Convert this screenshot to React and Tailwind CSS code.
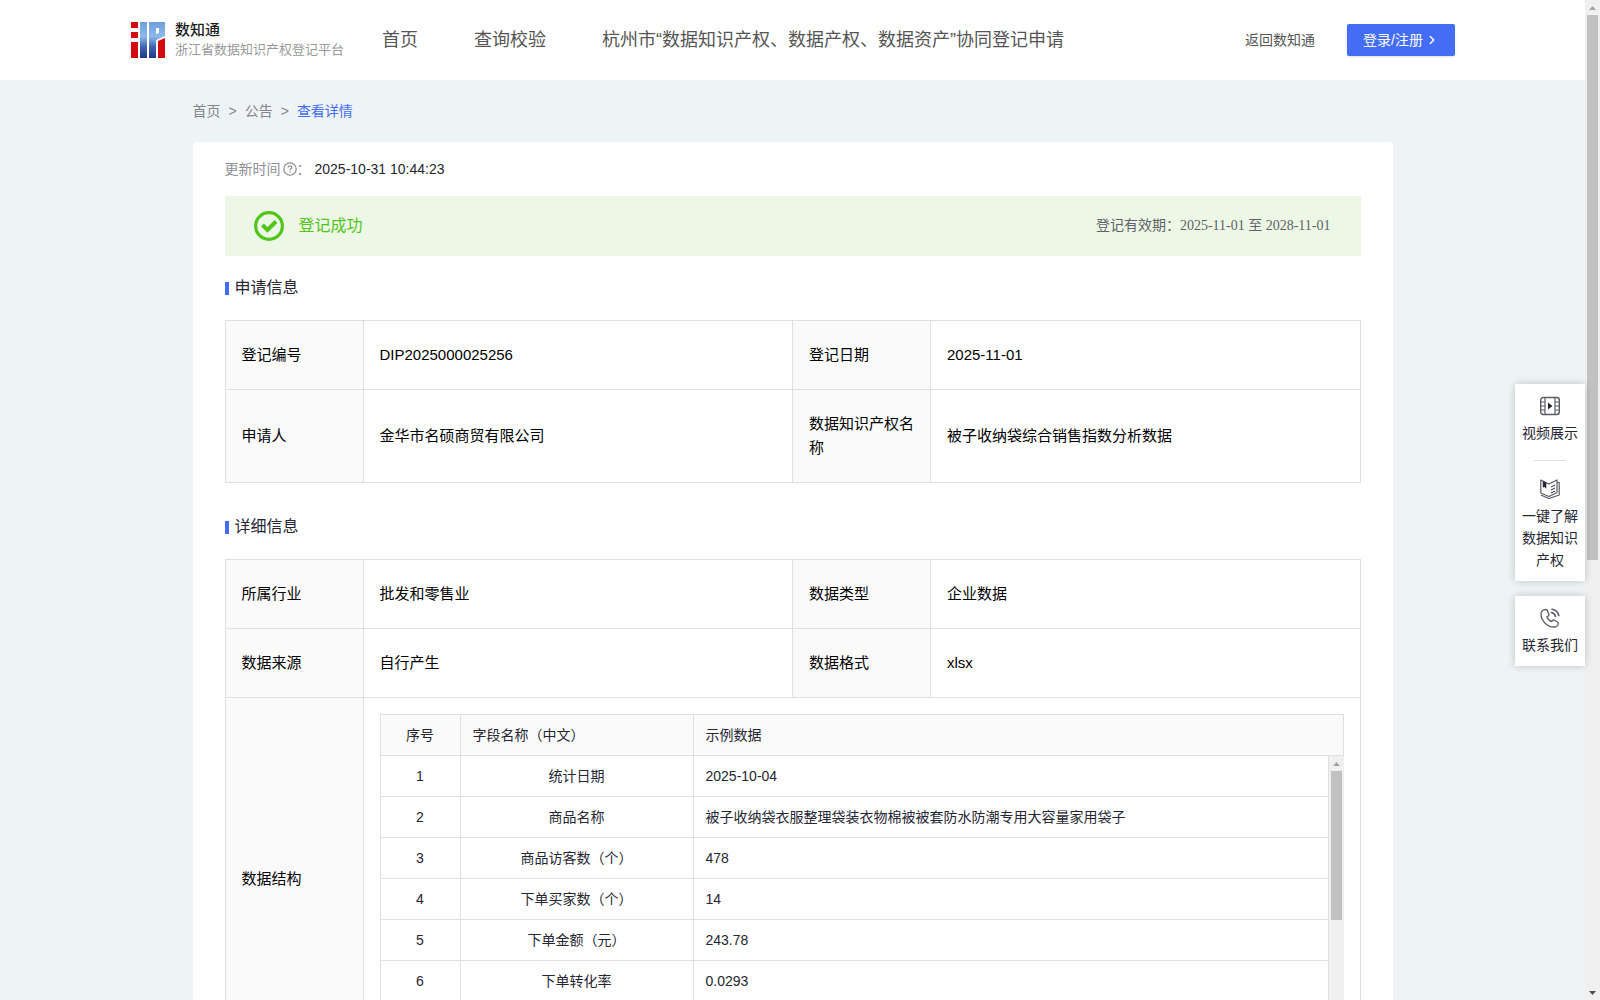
import { ChevronRight } from "lucide-react";

const navLinks = ["首页", "查询校验", "杭州市“数据知识产权、数据产权、数据资产”协同登记申请"];

const applyRows = [
  ["登记编号", "DIP2025000025256", "登记日期", "2025-11-01"],
  ["申请人", "金华市名硕商贸有限公司", "数据知识产权名称", "被子收纳袋综合销售指数分析数据"],
];

const detailRows = [
  ["所属行业", "批发和零售业", "数据类型", "企业数据"],
  ["数据来源", "自行产生", "数据格式", "xlsx"],
];

const fields = [
  ["统计日期", "2025-10-04"],
  ["商品名称", "被子收纳袋衣服整理袋装衣物棉被被套防水防潮专用大容量家用袋子"],
  ["商品访客数（个）", "478"],
  ["下单买家数（个）", "14"],
  ["下单金额（元）", "243.78"],
  ["下单转化率", "0.0293"],
];

const Logo = () => (
  <svg width="34" height="36" viewBox="0 0 34 36" aria-hidden="true">
    <defs>
      <linearGradient id="logoBlue" x1="0" y1="0" x2="0" y2="36" gradientUnits="userSpaceOnUse">
        <stop offset="0" stopColor="#6f9fdc" />
        <stop offset="0.4" stopColor="#8db8ea" />
        <stop offset="0.7" stopColor="#3f62ae" />
        <stop offset="1" stopColor="#223a86" />
      </linearGradient>
    </defs>
    <path fill="#d20a10" d="M0 0h7v6H0zM0 10h7v6H0zM0 20h7v16H0zM27 19l7-3v20h-7z" />
    <path fill="url(#logoBlue)" d="M9 0h7v36H9zM18 0h16v14l-9 4v18h-7zM25 6v6l3-1V6z" fillRule="evenodd" />
  </svg>
);

const VideoIcon = () => (
  <svg width="20" height="20" viewBox="0 0 20 20" fill="none" stroke="#5a5c66" aria-hidden="true">
    <rect x="0.7" y="1.5" width="18.6" height="17" rx="2.5" strokeWidth="1.4" />
    <path d="M5 1.5v17M15 1.5v17M1 6h4M1 10h4M1 14h4M15 6h4M15 10h4M15 14h4" strokeWidth="1.2" />
    <path d="M8 6.500l4.500 3.500L8 13.500z" fill="#252631" stroke="none" />
  </svg>
);

const BookIcon = () => (
  <svg width="20" height="20" viewBox="0 0 20 20" fill="none" stroke="#5a5c66" strokeLinejoin="round" aria-hidden="true">
    <path d="M.8 1l8 4L17 1v12.500L9 17.500.8 14z" strokeWidth="1.2" />
    <path d="M17 3.500h2.200V16L9 19.500.8 16" strokeWidth="1.2" />
    <path d="M11 8l4-2M11 11l4-2M11 14l4-2" stroke="#252631" />
    <path d="M2.800 2l3.500 1.700v6L4.600 8l-1.800.5z" fill="#252631" stroke="none" />
  </svg>
);

const PhoneIcon = () => (
  <svg width="20" height="20" viewBox="0 0 20 20" fill="none" stroke="#5a5c66" strokeLinejoin="round" strokeLinecap="round" aria-hidden="true">
    <path
      d="M5.500 1.500C3 1.500 1 3.500 1 6c0 6.500 6 13 13 13 2.500 0 4.300-1.700 4.300-3.500 0-.7-.3-1.200-.8-1.500l-3-1.800c-.7-.4-1.400-.2-1.900.3l-1 1.200c-1.800-.6-4-2.900-4.700-4.900L8.300 8c.6-.5.8-1.200.5-1.900L7.300 2.500c-.3-.7-.9-1-1.800-1z"
      strokeWidth="1.3"
    />
    <path d="M11.500 4.500c2.200.5 3.500 1.800 4 4M12 1.200c3.700.6 6 2.800 6.800 6.300" strokeWidth="1.6" />
  </svg>
);

const HelpIcon = () => (
  <svg width="14" height="14" viewBox="0 0 14 14" fill="none" stroke="#8f9096" strokeWidth="1.300" aria-label="说明">
    <circle cx="7" cy="7" r="6.200" />
    <path d="M5.200 5.600c0-2.300 3.600-2.300 3.600 0C8.800 6.800 7 6.800 7 8.200M7 9.300v1.200" />
  </svg>
);

const SuccessIcon = () => (
  <svg width="30" height="30" viewBox="0 0 30 30" fill="none" stroke="#52c41a" aria-hidden="true">
    <circle cx="15" cy="15" r="13.400" strokeWidth="3.200" />
    <path d="M8.500 14l5 5 8.500-8.500" strokeWidth="4" />
  </svg>
);

const Arrow = ({ down = false }) => (
  <svg width="7" height="4" viewBox="0 0 7 4" aria-hidden="true">
    <path d={down ? "M0 0h7L3.500 4z" : "M0 4h7L3.500 0z"} fill={down ? "#505050" : "#a3a3a3"} />
  </svg>
);

const ScrollBar = ({ children }) => (
  <div className="flex w-[15px] shrink-0 flex-col items-center bg-[#f0f0f0]">
    <div className="flex h-[15px] shrink-0 items-center">
      <Arrow />
    </div>
    <div className="w-full flex-1 px-[2px]">{children}</div>
    <div className="flex h-[15px] shrink-0 items-center">
      <Arrow down />
    </div>
  </div>
);

const SectionTitle = ({ children }) => (
  <h2 className="flex h-6 items-center gap-[6px] text-base text-[#252631]">
    <span className="h-[13px] w-1 bg-[#446df6]"></span>
    {children}
  </h2>
);

const InfoTable = ({ rows, children }) => (
  <table className="w-full table-fixed border-collapse text-[15px] leading-6 text-black">
    <colgroup>
      <col className="w-[138px]" />
      <col />
      <col className="w-[138px]" />
      <col />
    </colgroup>
    <tbody>
      {rows.map((row) => (
        <tr key={row[0]}>
          {row.map((text, i) =>
            i % 2 === 0 ? (
              <th
                key={text}
                scope="row"
                className="h-[69px] border border-[#e0e0e0] bg-[#fafafa] px-4 py-[22px] text-left font-normal"
              >
                {text}
              </th>
            ) : (
              <td key={text} className="border border-[#e0e0e0] px-4">
                {text}
              </td>
            )
          )}
        </tr>
      ))}
      {children}
    </tbody>
  </table>
);

const cell = "h-[41px] border-r border-b border-[#e0e0e0] px-3 font-normal";

const FieldCols = () => (
  <colgroup>
    <col className="w-20" />
    <col className="w-[233px]" />
    <col />
  </colgroup>
);

const FieldTable = () => (
  <div className="border-l border-[#e0e0e0] text-sm text-[#252631]">
    <table className="w-full table-fixed border-separate border-spacing-0 border-t border-[#e0e0e0]">
      <FieldCols />
      <thead>
        <tr className="bg-[#fafafa]">
          <th className={`${cell} text-center`}>序号</th>
          <th className={`${cell} text-left`}>字段名称（中文）</th>
          <th className={`${cell} text-left`}>示例数据</th>
        </tr>
      </thead>
    </table>
    <div className="flex h-[287px] overflow-hidden">
      <div className="min-w-0 flex-1">
        <table className="w-full table-fixed border-separate border-spacing-0">
          <FieldCols />
          <tbody>
            {fields.map(([name, sample], i) => (
              <tr key={name}>
                <td className={`${cell} text-center`}>{i + 1}</td>
                <td className={`${cell} text-center`}>{name}</td>
                <td className={cell}>{sample}</td>
              </tr>
            ))}
          </tbody>
        </table>
      </div>
      <ScrollBar>
        <div className="h-[149px] bg-[#c1c1c1]"></div>
      </ScrollBar>
    </div>
  </div>
);

const Header = () => (
  <header className="flex h-20 items-center bg-white pr-[130px] pl-[131px]">
    <a href="#" className="flex items-center gap-[10px]">
      <Logo />
      <span className="flex flex-col whitespace-nowrap">
        <span className="text-[15px] leading-5 font-medium text-[#1f1f1f]">数知通</span>
        <span className="text-[13px] leading-5 text-[#999999]">浙江省数据知识产权登记平台</span>
      </span>
    </a>
    <nav className="ml-[38px] flex gap-14 text-lg whitespace-nowrap text-[#555555]">
      {navLinks.map((label) => (
        <a key={label} href="#">
          {label}
        </a>
      ))}
    </nav>
    <div className="ml-auto flex items-center gap-8 text-sm whitespace-nowrap">
      <a href="#" className="text-[#555555]">
        返回数知通
      </a>
      <button className="flex h-8 items-center gap-[2px] rounded-[2px] bg-[#446df6] px-4 text-white shadow-sm">
        登录/注册
        <ChevronRight size={14} strokeWidth={2.5} />
      </button>
    </div>
  </header>
);

const SideItem = ({ icon, children }) => (
  <a href="#" className="flex flex-col items-center gap-[6px] text-center">
    {icon}
    <span className="leading-[22px]">{children}</span>
  </a>
);

const SideTools = () => (
  <aside className="absolute top-96 right-[15px] flex w-[70px] flex-col gap-[15px] text-sm text-[#252631]">
    <div className="flex flex-col items-center bg-white px-[6px] pt-3 pb-[10px] shadow-[0_0_8px_rgba(0,0,0,0.2)]">
      <SideItem icon={<VideoIcon />}>视频展示</SideItem>
      <hr className="mt-4 mb-[18px] w-8 border-[#e0e0e0]" />
      <SideItem icon={<BookIcon />}>一键了解数据知识产权</SideItem>
    </div>
    <div className="bg-white px-[6px] pt-3 pb-[10px] shadow-[0_0_8px_rgba(0,0,0,0.2)]">
      <SideItem icon={<PhoneIcon />}>联系我们</SideItem>
    </div>
  </aside>
);

const App = () => (
  <div className="flex h-screen overflow-hidden bg-[#eef3f6] font-['Liberation_Sans','Noto_Sans_CJK_SC',sans-serif]">
    <div className="min-w-0 flex-1 overflow-hidden">
      <Header />
      <main className="mx-auto max-w-[1200px]">
        <nav className="flex h-[62px] items-center gap-2 text-sm text-[#85868c]">
          <a href="#">首页</a>
          <span>&gt;</span>
          <a href="#">公告</a>
          <span>&gt;</span>
          <a href="#" className="text-[#446df6]">
            查看详情
          </a>
        </nav>
        <section className="rounded-t bg-white px-8 pt-4">
          <div className="flex h-[22px] items-center text-sm text-[#252631]">
            <span className="flex items-center text-[#8f9096]">
              更新时间
              <span className="ml-[2px]">
                <HelpIcon />
              </span>
              ：
            </span>
            <time className="ml-1">2025-10-31 10:44:23</time>
          </div>
          <div className="mt-4 flex h-[60px] items-center bg-[#ecf7e6] pr-[30px] pl-[29px]">
            <SuccessIcon />
            <strong className="ml-[15px] text-base font-normal text-[#52c41a]">登记成功</strong>
            <p className="ml-auto font-['Liberation_Serif','Noto_Sans_CJK_SC',serif] text-sm text-[#5f6266]">
              登记有效期：2025-11-01 至 2028-11-01
            </p>
          </div>
          <div className="my-5">
            <SectionTitle>申请信息</SectionTitle>
          </div>
          <InfoTable rows={applyRows} />
          <div className="mt-8 mb-5">
            <SectionTitle>详细信息</SectionTitle>
          </div>
          <InfoTable rows={detailRows}>
            <tr>
              <th scope="row" className="border border-[#e0e0e0] bg-[#fafafa] px-4 text-left font-normal">
                数据结构
              </th>
              <td colSpan={3} className="border border-[#e0e0e0] p-4">
                <FieldTable />
              </td>
            </tr>
          </InfoTable>
        </section>
      </main>
    </div>
    <ScrollBar>
      <div className="h-[545px] bg-[#c1c1c1]"></div>
    </ScrollBar>
    <SideTools />
  </div>
);

export default App;
